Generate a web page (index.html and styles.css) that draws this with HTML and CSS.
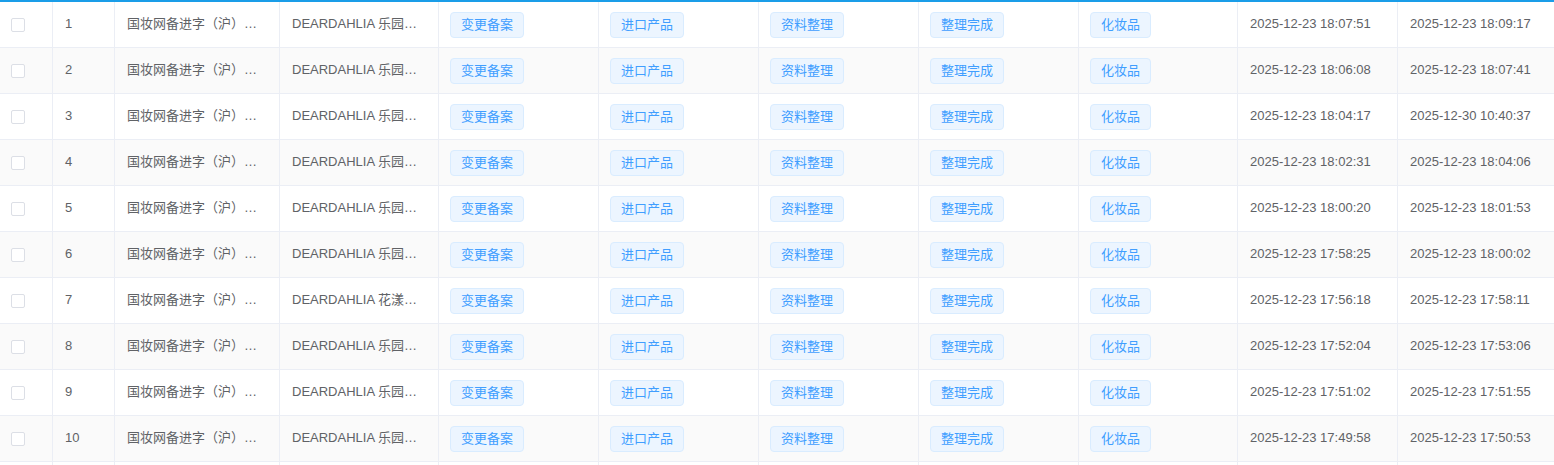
FILE: index.html
```html
<!DOCTYPE html>
<html lang="zh-CN">
<head>
<meta charset="utf-8">
<title>备案列表</title>
<link rel="stylesheet" href="styles.css">
</head>
<body>
<div class="table">
  <div class="row">
    <div class="cell cb"><span class="checkbox"></span></div>
    <div class="cell">1</div>
    <div class="cell">国妆网备进字（沪）…</div>
    <div class="cell">DEARDAHLIA 乐园…</div>
    <div class="cell"><span class="tag">变更备案</span></div>
    <div class="cell"><span class="tag">进口产品</span></div>
    <div class="cell"><span class="tag">资料整理</span></div>
    <div class="cell"><span class="tag">整理完成</span></div>
    <div class="cell"><span class="tag">化妆品</span></div>
    <div class="cell">2025-12-23 18:07:51</div>
    <div class="cell last">2025-12-23 18:09:17</div>
  </div>
  <div class="row">
    <div class="cell cb"><span class="checkbox"></span></div>
    <div class="cell">2</div>
    <div class="cell">国妆网备进字（沪）…</div>
    <div class="cell">DEARDAHLIA 乐园…</div>
    <div class="cell"><span class="tag">变更备案</span></div>
    <div class="cell"><span class="tag">进口产品</span></div>
    <div class="cell"><span class="tag">资料整理</span></div>
    <div class="cell"><span class="tag">整理完成</span></div>
    <div class="cell"><span class="tag">化妆品</span></div>
    <div class="cell">2025-12-23 18:06:08</div>
    <div class="cell last">2025-12-23 18:07:41</div>
  </div>
  <div class="row">
    <div class="cell cb"><span class="checkbox"></span></div>
    <div class="cell">3</div>
    <div class="cell">国妆网备进字（沪）…</div>
    <div class="cell">DEARDAHLIA 乐园…</div>
    <div class="cell"><span class="tag">变更备案</span></div>
    <div class="cell"><span class="tag">进口产品</span></div>
    <div class="cell"><span class="tag">资料整理</span></div>
    <div class="cell"><span class="tag">整理完成</span></div>
    <div class="cell"><span class="tag">化妆品</span></div>
    <div class="cell">2025-12-23 18:04:17</div>
    <div class="cell last">2025-12-30 10:40:37</div>
  </div>
  <div class="row">
    <div class="cell cb"><span class="checkbox"></span></div>
    <div class="cell">4</div>
    <div class="cell">国妆网备进字（沪）…</div>
    <div class="cell">DEARDAHLIA 乐园…</div>
    <div class="cell"><span class="tag">变更备案</span></div>
    <div class="cell"><span class="tag">进口产品</span></div>
    <div class="cell"><span class="tag">资料整理</span></div>
    <div class="cell"><span class="tag">整理完成</span></div>
    <div class="cell"><span class="tag">化妆品</span></div>
    <div class="cell">2025-12-23 18:02:31</div>
    <div class="cell last">2025-12-23 18:04:06</div>
  </div>
  <div class="row">
    <div class="cell cb"><span class="checkbox"></span></div>
    <div class="cell">5</div>
    <div class="cell">国妆网备进字（沪）…</div>
    <div class="cell">DEARDAHLIA 乐园…</div>
    <div class="cell"><span class="tag">变更备案</span></div>
    <div class="cell"><span class="tag">进口产品</span></div>
    <div class="cell"><span class="tag">资料整理</span></div>
    <div class="cell"><span class="tag">整理完成</span></div>
    <div class="cell"><span class="tag">化妆品</span></div>
    <div class="cell">2025-12-23 18:00:20</div>
    <div class="cell last">2025-12-23 18:01:53</div>
  </div>
  <div class="row">
    <div class="cell cb"><span class="checkbox"></span></div>
    <div class="cell">6</div>
    <div class="cell">国妆网备进字（沪）…</div>
    <div class="cell">DEARDAHLIA 乐园…</div>
    <div class="cell"><span class="tag">变更备案</span></div>
    <div class="cell"><span class="tag">进口产品</span></div>
    <div class="cell"><span class="tag">资料整理</span></div>
    <div class="cell"><span class="tag">整理完成</span></div>
    <div class="cell"><span class="tag">化妆品</span></div>
    <div class="cell">2025-12-23 17:58:25</div>
    <div class="cell last">2025-12-23 18:00:02</div>
  </div>
  <div class="row">
    <div class="cell cb"><span class="checkbox"></span></div>
    <div class="cell">7</div>
    <div class="cell">国妆网备进字（沪）…</div>
    <div class="cell">DEARDAHLIA 花漾…</div>
    <div class="cell"><span class="tag">变更备案</span></div>
    <div class="cell"><span class="tag">进口产品</span></div>
    <div class="cell"><span class="tag">资料整理</span></div>
    <div class="cell"><span class="tag">整理完成</span></div>
    <div class="cell"><span class="tag">化妆品</span></div>
    <div class="cell">2025-12-23 17:56:18</div>
    <div class="cell last">2025-12-23 17:58:11</div>
  </div>
  <div class="row">
    <div class="cell cb"><span class="checkbox"></span></div>
    <div class="cell">8</div>
    <div class="cell">国妆网备进字（沪）…</div>
    <div class="cell">DEARDAHLIA 乐园…</div>
    <div class="cell"><span class="tag">变更备案</span></div>
    <div class="cell"><span class="tag">进口产品</span></div>
    <div class="cell"><span class="tag">资料整理</span></div>
    <div class="cell"><span class="tag">整理完成</span></div>
    <div class="cell"><span class="tag">化妆品</span></div>
    <div class="cell">2025-12-23 17:52:04</div>
    <div class="cell last">2025-12-23 17:53:06</div>
  </div>
  <div class="row">
    <div class="cell cb"><span class="checkbox"></span></div>
    <div class="cell">9</div>
    <div class="cell">国妆网备进字（沪）…</div>
    <div class="cell">DEARDAHLIA 乐园…</div>
    <div class="cell"><span class="tag">变更备案</span></div>
    <div class="cell"><span class="tag">进口产品</span></div>
    <div class="cell"><span class="tag">资料整理</span></div>
    <div class="cell"><span class="tag">整理完成</span></div>
    <div class="cell"><span class="tag">化妆品</span></div>
    <div class="cell">2025-12-23 17:51:02</div>
    <div class="cell last">2025-12-23 17:51:55</div>
  </div>
  <div class="row">
    <div class="cell cb"><span class="checkbox"></span></div>
    <div class="cell">10</div>
    <div class="cell">国妆网备进字（沪）…</div>
    <div class="cell">DEARDAHLIA 乐园…</div>
    <div class="cell"><span class="tag">变更备案</span></div>
    <div class="cell"><span class="tag">进口产品</span></div>
    <div class="cell"><span class="tag">资料整理</span></div>
    <div class="cell"><span class="tag">整理完成</span></div>
    <div class="cell"><span class="tag">化妆品</span></div>
    <div class="cell">2025-12-23 17:49:58</div>
    <div class="cell last">2025-12-23 17:50:53</div>
  </div>
  <div class="row">
    <div class="cell cb"></div>
    <div class="cell"></div>
    <div class="cell"></div>
    <div class="cell"></div>
    <div class="cell"></div>
    <div class="cell"></div>
    <div class="cell"></div>
    <div class="cell"></div>
    <div class="cell"></div>
    <div class="cell"></div>
    <div class="cell last"></div>
  </div>
</div>
</body>
</html>
```

FILE: styles.css
```css
html, body {
  margin: 0;
  padding: 0;
  background: #ffffff;
}

body {
  height: 465px;
  overflow: hidden;
  font-family: "Liberation Sans", "Noto Sans CJK SC", sans-serif;
  font-size: 13px;
  color: #606266;
}

.table {
  width: 1554px;
  border-top: 2px solid #1a9de8;
}

.row {
  display: grid;
  grid-template-columns: 53px 62px 165px 159px 160px 160px 160px 160px 159px 160px 156px;
  height: 46px;
  border-bottom: 1px solid #ebeef5;
  box-sizing: border-box;
  background: #ffffff;
}

.row:nth-child(even) {
  background: #fafafa;
}

.cell {
  box-sizing: border-box;
  border-right: 1px solid #ebeef5;
  padding: 0 12px 2px;
  display: flex;
  align-items: center;
  white-space: nowrap;
  overflow: hidden;
  line-height: 23px;
}

.cell.last {
  border-right: none;
}

.cell.cb {
  padding-left: 11px;
}

.checkbox {
  display: block;
  width: 14px;
  height: 14px;
  box-sizing: border-box;
  border: 1px solid #dcdfe6;
  border-radius: 2px;
  background: #ffffff;
  margin-bottom: -2px;
}

.tag {
  display: inline-flex;
  align-items: center;
  box-sizing: border-box;
  height: 26px;
  padding: 0 10px;
  margin-left: -1px;
  margin-bottom: -2px;
  font-size: 13px;
  color: #409eff;
  background: #ecf5ff;
  border: 1px solid #d9ecff;
  border-radius: 4px;
}
```
